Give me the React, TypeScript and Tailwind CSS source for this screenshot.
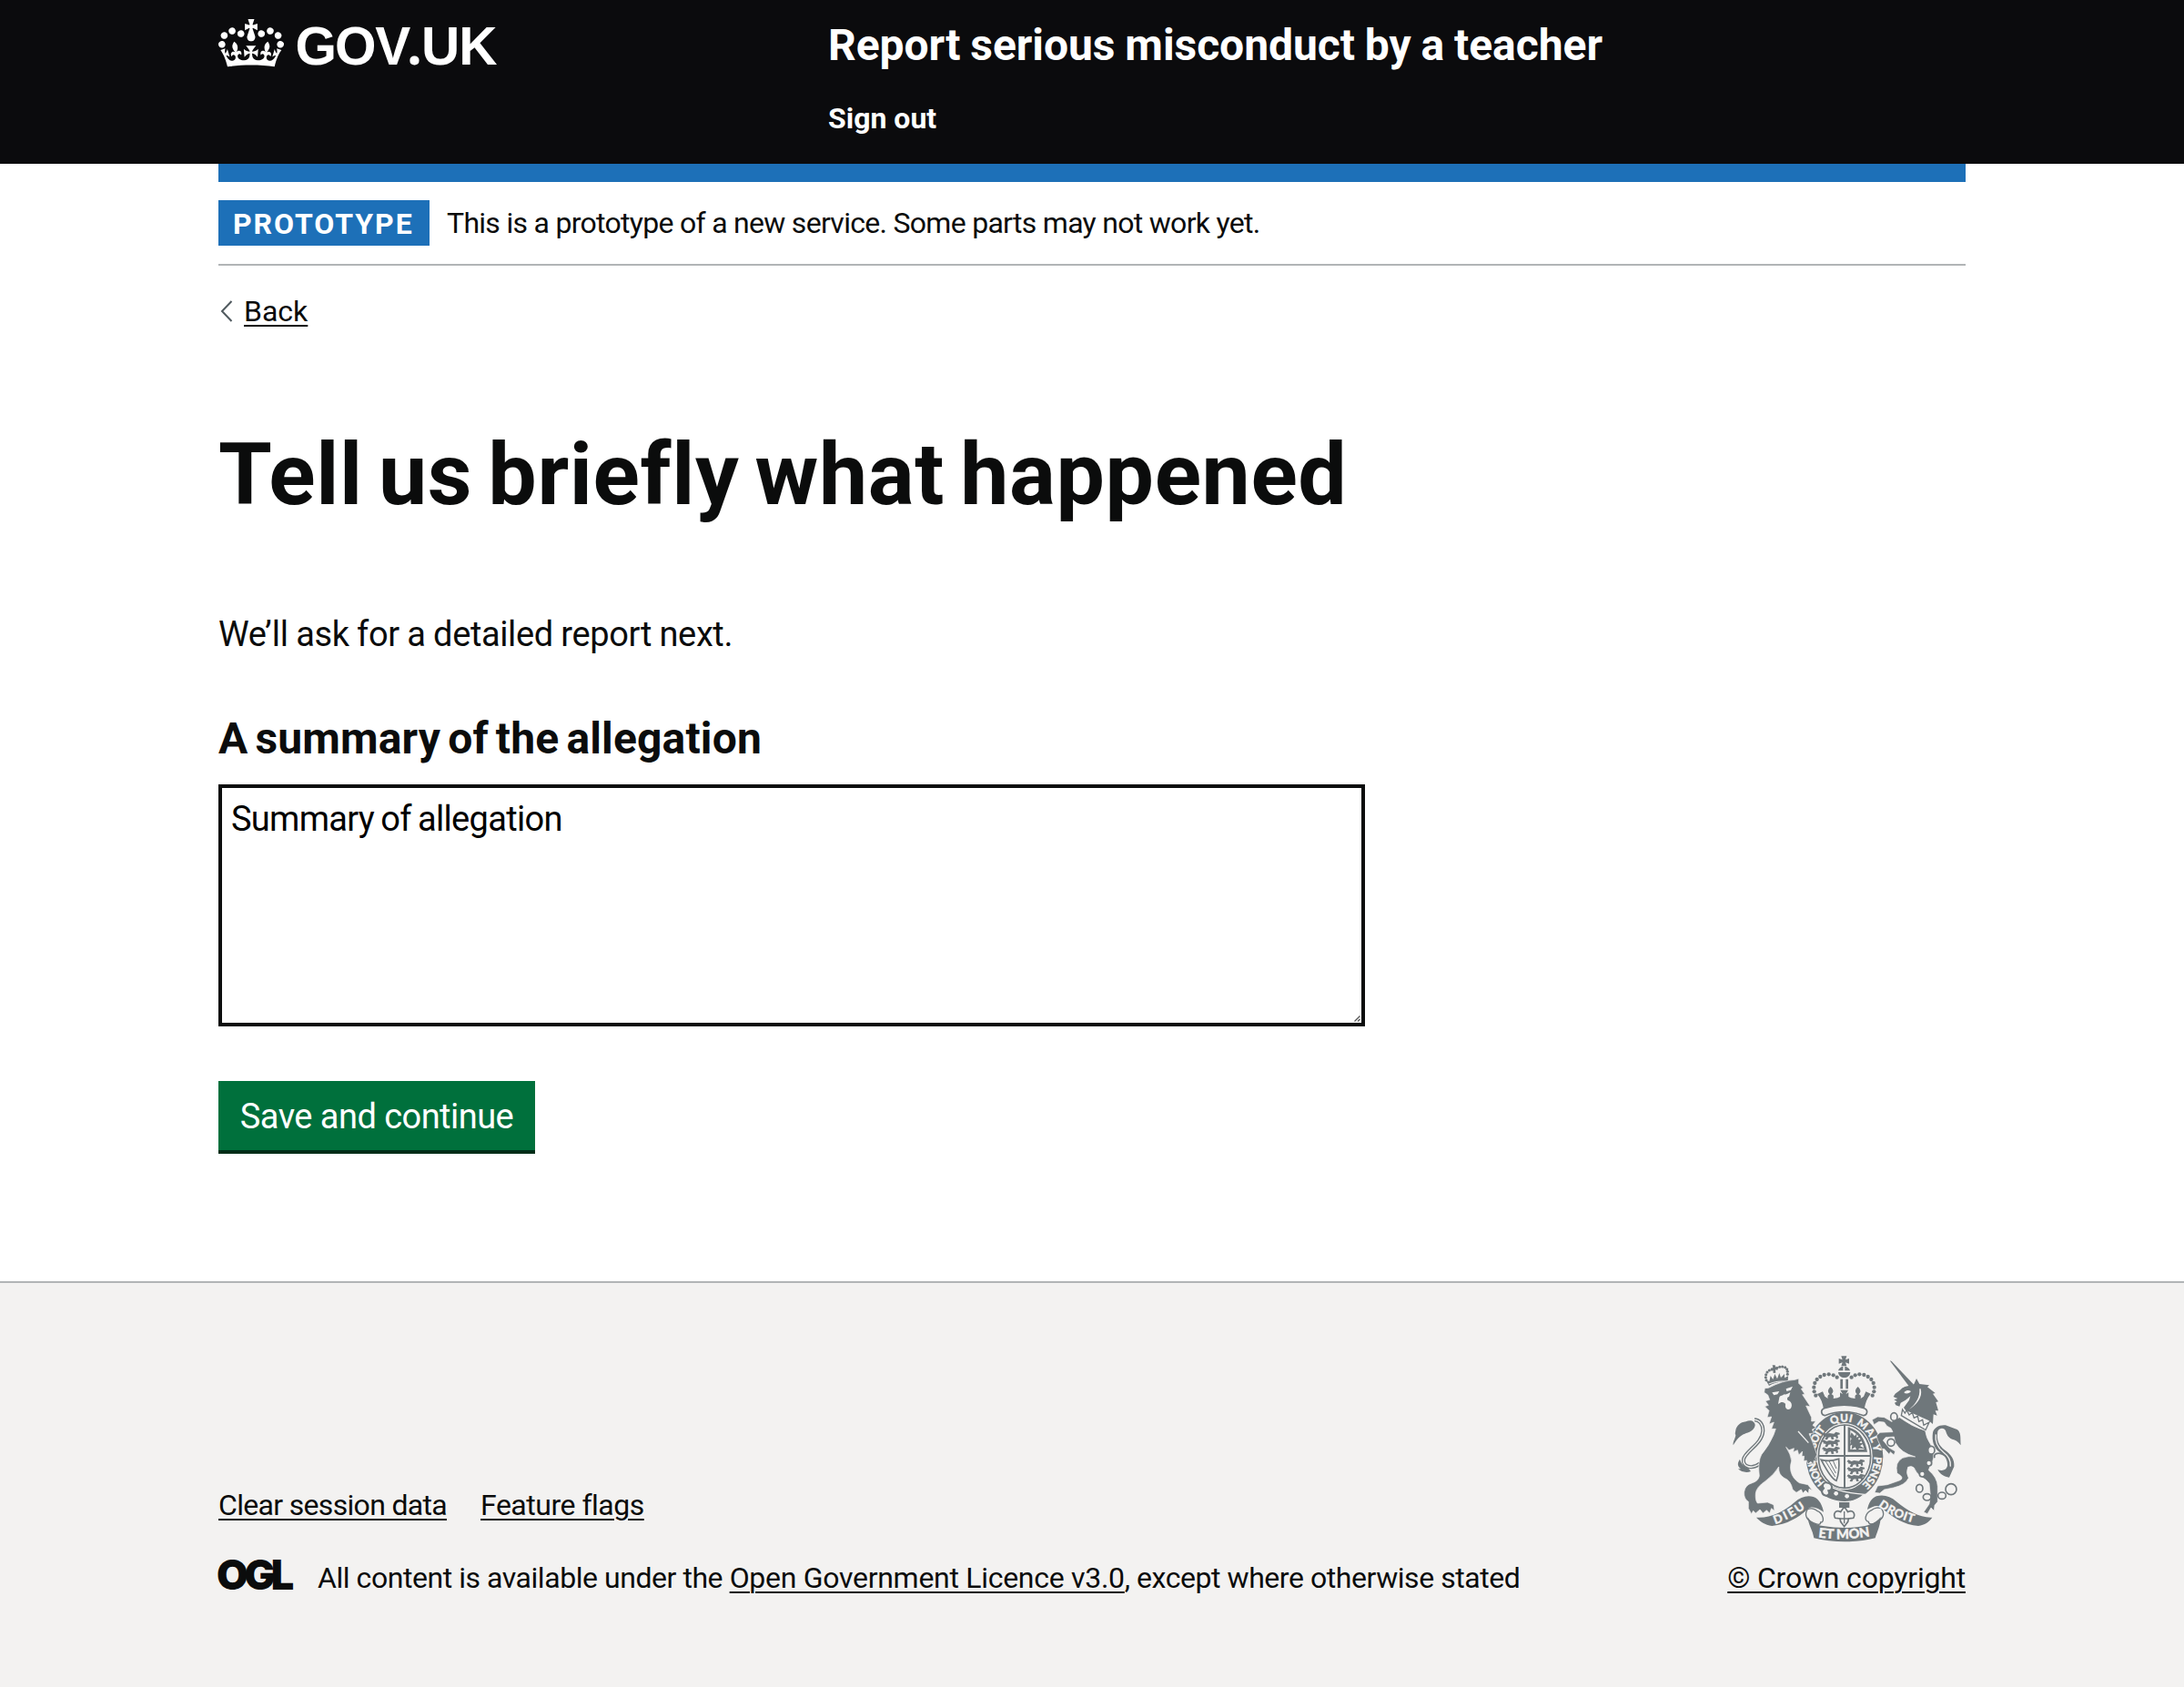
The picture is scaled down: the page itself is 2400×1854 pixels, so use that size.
import React from "react";

const CROWN =
  "M25 30.2c3.5 1.5 7.7-.2 9.1-3.7 1.5-3.6-.2-7.8-3.9-9.2-3.6-1.4-7.6.3-9.1 3.9-1.4 3.5.3 7.5 3.9 9zM9 39.5c3.6 1.5 7.8-.2 9.2-3.7 1.5-3.6-.2-7.8-3.9-9.1-3.6-1.5-7.6.2-9.1 3.8-1.4 3.5.3 7.5 3.8 9zM4.4 57.2c3.5 1.5 7.7-.2 9.1-3.8 1.5-3.6-.2-7.7-3.9-9.1-3.5-1.5-7.6.3-9.1 3.8-1.4 3.5.3 7.6 3.9 9.1zm38.3-21.4c3.5 1.5 7.7-.2 9.1-3.8 1.5-3.6-.2-7.7-3.9-9.1-3.6-1.5-7.6.3-9.1 3.8-1.3 3.6.4 7.7 3.9 9.1zm64.4-5.6c-3.6 1.5-7.8-.2-9.1-3.7-1.5-3.6.2-7.8 3.8-9.2 3.6-1.4 7.7.3 9.2 3.9 1.3 3.5-.4 7.5-3.9 9zm15.9 9.3c-3.6 1.5-7.7-.2-9.1-3.7-1.5-3.6.2-7.8 3.7-9.1 3.6-1.5 7.7.2 9.2 3.8 1.5 3.5-.3 7.5-3.8 9zm4.7 17.7c-3.6 1.5-7.8-.2-9.2-3.8-1.5-3.6.2-7.7 3.9-9.1 3.6-1.5 7.7.3 9.2 3.8 1.3 3.5-.4 7.6-3.9 9.1zM89.3 35.8c-3.6 1.5-7.8-.2-9.2-3.8-1.4-3.6.2-7.7 3.9-9.1 3.6-1.5 7.7.3 9.2 3.8 1.4 3.6-.3 7.7-3.9 9.1zM69.7 17.7l8.9 4.7V9.3l-8.9 2.8c-.2-.3-.5-.6-.9-.9L72.4 0H59.6l3.5 11.2c-.3.3-.6.5-.9.9l-8.8-2.8v13.1l8.8-4.7c.3.3.6.7.9.9l-5 15.4v.1c-.2.8-.4 1.6-.4 2.4 0 4.1 3.1 7.5 7 8.1h.2c.3 0 .7.1 1 .1.4 0 .7 0 1-.1h.2c4-.6 7.1-4.1 7.1-8.1 0-.8-.1-1.7-.4-2.4V34l-5.1-15.4c.4-.2.7-.6 1-.9zM66 92.8c16.9 0 32.8 1.1 47.1 3.2 4-16.9 8.9-26.7 14-33.5l-9.6-3.4c1 4.9 1.1 7.2 0 10.2-1.5-1.4-3-4.3-4.2-8.7L108.6 76c2.8-2 5-3.2 7.5-3.3-4.4 9.4-10 11.9-13.6 11.2-4.3-.8-6.3-4.6-5.6-7.9 1-4.7 5.7-5.9 8-.5 4.3-8.7-3-11.4-7.6-8.8 7.1-7.2 7.9-13.5 2.1-21.1-8 6.1-8.1 12.3-4.5 20.8-4.7-5.4-12.1-2.5-9.5 6.2 3.4-5.2 7.9-2 7.2 3.1-.6 4.3-6.4 7.8-13.5 7.2-10.3-.9-10.9-8-11.2-13.8 2.5-.5 7.1 1.8 11 7.3L80.2 60c-4.1 4.4-8 5.3-12.3 5.4 1.4-4.4 8-11.6 8-11.6H55.5s6.4 7.2 7.9 11.6c-4.2-.1-8-1-12.3-5.4l1.4 16.4c3.9-5.5 8.5-7.7 10.9-7.3-.3 5.8-.9 12.8-11.1 13.8-7.2.6-12.9-2.9-13.5-7.2-.7-5 3.8-8.3 7.1-3.1 2.7-8.7-4.6-11.6-9.4-6.2 3.7-8.5 3.6-14.7-4.6-20.8-5.8 7.6-5 13.9 2.2 21.1-4.7-2.6-11.9.1-7.7 8.8 2.3-5.5 7.1-4.2 8.1.5.7 3.3-1.3 7.1-5.7 7.9-3.5.7-9-1.8-13.5-11.2 2.5.1 4.7 1.3 7.5 3.3l-4.7-15.4c-1.2 4.4-2.7 7.2-4.3 8.7-1.1-3-.9-5.3 0-10.2l-9.5 3.4c5 6.9 9.9 16.7 14 33.5 14.8-2.1 30.8-3.2 47.7-3.2z";

function GovUkLogo() {
  return (
    <svg width="308" height="54" viewBox="0 0 308 54" className="block overflow-visible fill-white" aria-label="GOV.UK">
      <path d={CROWN} transform="scale(0.5455)" />
      <text y="50" x="84.5 128 172.3" className="font-['Liberation_Sans',sans-serif] text-[58.500px] font-bold">
        GOV
        <tspan x="207.3" className="font-['Noto_Sans',sans-serif]">.</tspan>
        <tspan x="222.9 264.2">UK</tspan>
      </text>
    </svg>
  );
}

const crownDots = [
  [344, 190], [339, 177], [338, 163], [341, 149], [348, 137], [359, 128], [372, 122], [387, 120], [402, 123], [414, 130],
  [462, 130], [474, 123], [488, 120], [503, 122], [516, 128], [527, 137], [534, 149], [537, 163], [536, 177], [531, 190],
];

const smallCrownDots = [
  [181, 139], [179, 130], [180, 121], [184, 113], [191, 107], [199, 104], [216, 99], [225, 96], [234, 95], [243, 97], [249, 103], [251, 111], [251, 120],
];

const lionsPassant = [
  [366, 312], [366, 336], [366, 360], [448, 402], [448, 426], [448, 450],
];

function RoyalArms() {
  return (
    <svg width="252" height="206" viewBox="70 56 756 618" className="block fill-[#6f777b]" aria-hidden="true">
      <defs>
        <path id="garter" d="M439 506A97 115 0 1 1 439.100 506" />
        <path id="ribbon-left" d="M210 614Q262 598 318 555" />
        <path id="ribbon-mid" d="M350 657Q438 670 530 653" />
        <path id="ribbon-right" d="M548 554Q602 594 670 611" />
      </defs>

      {/* imperial crown */}
      <path d="M428 60h18l-4 12 12-4v17l-12-4 4 12h-18l4-12-12 4V68l12 4z" />
      <path d="M440 94v14h17a20 20 0 0 0-17-14zM434 94v14h-16a20 20 0 0 1 16-14z" />
      <path d="M418 113h40c-1 12-10 18-20 18s-19-6-20-18z" />
      <path d="M425 136h8v32h-8zM443 136h8v32h-8z" />
      {crownDots.map(([x, y]) => (
        <circle key={`${x}-${y}`} cx={x} cy={y} r="6.4" />
      ))}
      <path d="M351 184l16-7 7 16 10 7c-2-8 0-12 6-14-8-8-7-15 3-25 10 10 11 17 3 25 6 2 8 6 6 14l14-2 8-4v-14l9 6-8-14h26l-8 14 9-6v14l8 4 14 2c-2-8 0-12 6-14-8-8-7-15 3-25 10 10 11 17 3 25 6 2 8 6 6 14l10-7 7-16 16 7c-12 14-18 31-21 51-42-13-92-13-134 0-3-20-9-37-22-51z" />
      <path d="M372 232c42-13 90-13 132 0 14 5 10 23-2 24-40-16-86-16-128 0-12-1-16-19-2-24z" className="fill-[#f3f2f1] stroke-[#6f777b] stroke-[5px]" />

      {/* garter and shield */}
      <ellipse cx="439" cy="391" rx="127" ry="147" />
      <ellipse cx="439" cy="391" rx="92" ry="110" className="fill-[#f3f2f1]" />
      <ellipse cx="439" cy="391" rx="86" ry="104" className="fill-none stroke-[#6f777b] stroke-[5px]" />
      <path d="M436 286h6v210h-6zM352 386h174v6H352z" />
      <path d="M450 294c34 8 56 34 64 82h-64zM458 304v64h46c-8-34-22-54-46-64z" fillRule="evenodd" />
      <path d="M462 312l10 12 8-10-2 14 10-4-4 12 14-2-10 12 14 2-12 8 16 10-18-2-8 8-6-12-12 8 2-16-8 4 4-14-4 2 6-12-6-6z" />
      {lionsPassant.map(([x, y]) => (
        <path
          key={`${x}-${y}`}
          transform={`translate(${x} ${y})`}
          d="M4 0l10 5 8-3 16 2 6-6 12 3 2 5-8 2 2 10-6 3-2-7-8 0 2 8-8 1-2-8-8 1-4 8-8-1 4-9-10-2 2-4-6-2z"
        />
      ))}
      <path d="M362 402c20 6 38 4 58-3 2 26 0 50-8 72-14-6-34-38-50-69z" className="fill-none stroke-[#6f777b] stroke-[5px]" />
      <path d="M376 406l32 52M388 406l22 40M401 405l11 26" className="stroke-[#6f777b] stroke-[3px]" />
      <g className="fill-[#f3f2f1] stroke-[#f3f2f1] font-['Lato',sans-serif] text-[35px] font-black">
        <text>
          <textPath href="#garter" startOffset="72" textLength="82">HONI</textPath>
        </text>
        <text>
          <textPath href="#garter" startOffset="192" textLength="72">SOIT</textPath>
        </text>
        <text>
          <textPath href="#garter" startOffset="289" textLength="68">QUI</textPath>
        </text>
        <text>
          <textPath href="#garter" startOffset="373" textLength="82">MAL</textPath>
        </text>
        <text>
          <textPath href="#garter" startOffset="462">Y</textPath>
        </text>
        <text>
          <textPath href="#garter" startOffset="500" textLength="104">PENSE</textPath>
        </text>
      </g>

      {/* buckle and strap */}
      <path d="M372 476c40 32 86 36 132 40-24 22-56 30-92 22-18-4-34-10-44-20z" className="stroke-[#f3f2f1] stroke-[4px]" />
      <path d="M384 478c-14-4-22 8-14 18-10 8-6 22 8 24 10 0 12-8 8-16 14-2 16-20-2-26z" className="fill-[#f3f2f1] stroke-[#6f777b] stroke-[6px]" />
      <circle cx="411" cy="513" r="7" className="fill-[#f3f2f1]" />
      <circle cx="447" cy="522" r="7" className="fill-[#f3f2f1]" />

      {/* lion crown */}
      {smallCrownDots.map(([x, y]) => (
        <circle key={`${x}-${y}`} cx={x} cy={y} r="4.6" />
      ))}
      <path d="M201 90l9 0 2 7 7 0-1 9-7-1 1 10-8 1-1-9-7 1 0-8 7-1z" />
      <path d="M180 140l11 3 4-18 8 12 6-18 8 16 7-19 5 15 12-12 0 13 12-6-1 20c-22-4-44 2-62 12z" />
      <path d="M189 152c20-8 40-11 64-8" className="fill-none stroke-[#f3f2f1] stroke-[3px]" />

      {/* lion tail */}
      <path d="M160 414c-28 22-58 10-54-14 6-28 62-50 64-94 0-22-12-36-28-36" className="fill-none stroke-[#6f777b] stroke-[12px]" />
      <path d="M160 414c-28 22-58 10-54-14 6-28 62-50 64-94 0-22-12-36-28-36" className="fill-none stroke-[#f3f2f1] stroke-[4px]" />
      <path d="M72 354c-2-12 8-24 8-34-4-4 0-12 0-16 4-14 14-26 34-28 14-8 30-2 30 12-2 18-22 24-34 28-16 6-28 20-38 38zM94 400c-10 14-8 24 4 32l-10 0c10 10 28 14 42 8l-10-12c-14-4-22-14-26-28z" />

      {/* lion head, mane, body and legs */}
      <path
        d="M188 165Q236 140 276 138L288 134V150L303 165 296 168 308 186 300 187 326 226 312 224 330 262V275L344 274 334 288 345 296 332 302 338 314 322 316 334 345 348 385 342 398 350 410 338 404 336 418 328 408 318 416 314 404 304 406 306 390 298 390 300 374 288 386 284 370 270 376 272 364 256 370 246 360Q262 385 264 405 258 425 262 440 268 465 290 478L318 484 333 503 322 498 320 513 310 503 302 512 296 500 280 510 268 500Q262 470 240 462 220 450 222 425 208 450 178 472 148 492 146 512 144 535 152 545L185 542 205 550 208 570 198 562 192 578 182 568 170 578 160 566 146 578 138 570 132 580 122 562V540Q106 530 108 508 110 485 135 478 155 472 158 455 152 410 165 385 190 355 205 320L212 300 198 300 206 278 190 284 198 260 184 262 190 240 176 226 188 222 178 208 192 204 186 188 174 180 176 166Z"
        className="stroke-[#f3f2f1] stroke-2"
      />
      <path d="M200 180l24-4-6 10-12 3zM246 168l22-8-6 12-14 4zM224 196c4-8 10-4 16-10 6 2 12-2 20-6l-4 14c-6 2-8 6-4 12 14 4 16 18 8 28-10 6-18-2-16-12 2-8-8-10-14-10l-10 6z" className="fill-[#f3f2f1]" />
      <path d="M286 308l34 38" className="fill-none stroke-[#f3f2f1] stroke-[4px]" />

      {/* unicorn head */}
      <path d="M588 75l6 2 72 76-12 10z" />
      <path d="M650 158L668 152 676 134 686 152 718 156 712 162 738 182 730 184 748 210 740 212 748 240 738 240 744 256 732 252 730 284 716 272 640 238 634 230 652 205 656 192 640 205 624 214 620 226 608 222 604 214 612 210 602 204 614 200 600 194 606 184 622 172Q632 160 650 158Z" />
      <path d="M636 178c8-6 14-6 22-2-4 7-14 9-22 6zM690 168c8 30-16 54-38 68 22-18 36-40 34-68z" className="fill-[#f3f2f1]" />
      <path d="M630 236l8 12 6-10 8 16 10-8 6 18 12-6 4 18 12-6 4 18 18-10-12 26-80-48z" className="fill-[#f3f2f1] stroke-[#6f777b] stroke-[4px]" />

      {/* unicorn body and legs */}
      <path
        d="M620 262Q660 292 705 306 708 330 722 350 740 378 728 412 720 420 716 436 745 460 746 490V540L736 552 734 570 724 560 712 580 700 574 718 548 722 520 718 480Q708 465 690 458 672 440 668 428 660 420 648 426 640 445 650 462 640 485 600 494L570 500 555 512 538 510 548 488 580 484 620 470Q640 462 612 446 604 410 630 396 650 388 672 392 625 380 606 345L602 326 574 328 566 338 586 362 606 374 602 386 590 376 586 384 570 366 562 366 548 336 544 322 556 312 598 310 592 298 578 290 570 278 552 276 536 286 530 270 548 260 570 262 594 276Z"
        className="stroke-[#f3f2f1] stroke-2"
      />

      {/* unicorn tail */}
      <path d="M736 396c-10-30 60-14 56 32-2 14-10 18-18 18" className="fill-none stroke-[#6f777b] stroke-[5px]" />
      <path d="M730 312c4-16 20-26 42-24l38 14c14 10 10 26 12 52-8-12-18-18-28-20-14-4-18-16-22-28-8-12-20-8-26 2-4 30 2 46 24 62 20 14 32 30 30 54l-16 36c-16-2-30-10-38-26 16 6 28 2 32-12 2-18-8-34-22-42-24-16-30-40-26-68z" />
      <path d="M740 318c-4 26 6 44 26 60 16 12 24 26 22 46" className="fill-none stroke-[#f3f2f1] stroke-[4px]" />

      {/* chain */}
      <g className="fill-[#f3f2f1] stroke-[#6f777b] stroke-[5px]">
        <ellipse cx="602" cy="260" rx="11" ry="13" />
        <ellipse cx="592" cy="345" rx="12" ry="12" />
        <ellipse cx="725" cy="370" rx="11" ry="13" />
        <circle cx="717" cy="413" r="9" />
        <circle cx="695" cy="449" r="9" />
        <ellipse cx="686" cy="496" rx="11" ry="13" />
        <ellipse cx="711" cy="525" rx="13" ry="11" />
        <ellipse cx="760" cy="520" rx="13" ry="11" />
        <circle cx="790" cy="499" r="18" />
      </g>

      {/* fleur-de-lis pendant */}
      <path d="M421 542h34v18h-34z" />
      <path d="M438 556l12 18c16-10 26 6 18 20l-16 2-2 10-12 16-12-16-2-10-16-2c-8-14 2-30 18-20z" className="fill-[#f3f2f1] stroke-[#6f777b] stroke-[5px]" />
      <path d="M422 596h32M438 572v40" className="stroke-[#6f777b] stroke-[4px]" />

      {/* motto ribbons */}
      <path d="M148 592c44 4 92-20 126-50 20-18 42-24 62-18 20 6 30 30 34 50-18-14-40-22-52-10-30 28-70 52-118 56-24-4-38-14-52-28z" />
      <path d="M728 592c-40 2-82-22-118-52-20-18-42-24-66-18-16 6-26 24-30 44 18-12 38-18 50-4 34 30 72 54 118 58 22-4 34-12 46-28z" />
      <path d="M316 566c-12 22 2 36 20 44 14 6 24 8 24-2 14 2 10-30-12-38-10-8-24-10-32-4zM560 562c16 22 2 36-16 46-14 8-26 8-26-2-16-2-12-28 10-38 10-8 24-10 32-6z" className="fill-[#f3f2f1] stroke-[#6f777b] stroke-[4px]" />
      <path d="M318 590c6 16 24 26 50 30 46 8 94 8 138 0 26-6 42-16 52-30 0 24-10 46-18 70-60 16-140 16-202 0-4-28-20-46-20-70z" />
      <g className="fill-[#f3f2f1] stroke-[#f3f2f1] font-['Lato',sans-serif] text-[39px] font-black">
        <text>
          <textPath href="#ribbon-left" startOffset="0" textLength="114">DIEU</textPath>
        </text>
        <text>
          <textPath href="#ribbon-mid" startOffset="2" textLength="172" className="text-[44px]">ET MON</textPath>
        </text>
        <text>
          <textPath href="#ribbon-right" startOffset="2" textLength="128">DROIT</textPath>
        </text>
      </g>
    </svg>
  );
}

const link = "underline decoration-2 underline-offset-4";

export default function App() {
  return (
    <div className="flex h-[1854px] flex-col bg-white font-['Roboto',sans-serif] text-[32px] leading-10 text-[#0b0c0c]">
      <header className="h-[180px] shrink-0 bg-[#0b0b0d] text-white">
        <div className="mx-auto flex w-[1920px]">
          <div className="w-[670px] pt-[21px]">
            <GovUkLogo />
          </div>
          <div className="pt-5">
            <div className="whitespace-nowrap text-[48px] leading-[60px] font-bold tracking-[-0.050px] [word-spacing:-1px]">
              Report serious misconduct by a teacher
            </div>
            <nav className="mt-[30px] font-bold">Sign out</nav>
          </div>
        </div>
      </header>

      <main className="mx-auto w-[1920px] flex-1">
        <div className="h-5 bg-[#1d70b8]" />
        <div className="flex h-[92px] items-center gap-5 border-b-2 border-[#b1b4b6]">
          <strong className="h-[50px] w-[232px] bg-[#1d70b8] pt-px pl-4 leading-[50px] font-bold tracking-[1.950px] text-white">
            PROTOTYPE
          </strong>
          <span className="-ml-px whitespace-nowrap tracking-[-0.71px]">
            This is a prototype of a new service. Some parts may not work yet.
          </span>
        </div>

        <div className="mt-[30px] flex items-center">
          <svg width="16" height="26" viewBox="0 0 16 26" className="mr-3 fill-none stroke-[#505a5f] stroke-2">
            <path d="M14.5 2 4 13l10.500 11" />
          </svg>
          <a className={link}>Back</a>
        </div>

        <h1 className="mt-[110px] whitespace-nowrap text-[95px] leading-[100px] font-bold tracking-[0.620px] [word-spacing:-7px]">
          Tell us briefly what happened
        </h1>
        <p className="mt-[100px] text-[38px] leading-[50px] tracking-[-0.38px] [word-spacing:-0.500px]">
          We’ll ask for a detailed report next.
        </p>
        <label className="mt-[60px] block text-[48px] leading-[60px] font-bold tracking-[0.150px] [word-spacing:-4px]">
          A summary of the allegation
        </label>
        <div className="relative mt-5 h-[266px] w-[1260px]">
          <textarea
            defaultValue="Summary of allegation"
            className="block h-full w-full resize-none border-4 border-[#0b0c0c] px-2.5 pt-[9px] text-[38px] leading-[50px] tracking-[-0.7px] text-black outline-none [word-spacing:-1.500px]"
          />
          <svg width="7" height="7" viewBox="0 0 7 7" className="absolute right-[5px] bottom-[5px] stroke-[#555] stroke-[1.300px]">
            <path d="M0.500 6.500 6.500 0.500M4 6.500 6.500 4" />
          </svg>
        </div>
        <button className="mt-[60px] block h-[76px] w-[348px] bg-[#00703c] pt-0.5 text-[38px] leading-[50px] tracking-[-0.54px] text-white shadow-[0_4px_0_#002d18]">
          Save and continue
        </button>
      </main>

      <footer className="h-[446px] shrink-0 border-t-2 border-[#b1b4b6] bg-[#f3f2f1] pt-[79px]">
        <div className="mx-auto flex h-[265px] w-[1920px] items-end justify-between">
          <div>
            <div className="mb-10 flex gap-[37px]">
              <a className={`${link} tracking-[-0.68px]`}>Clear session data</a>
              <a className={`${link} tracking-[-0.49px]`}>Feature flags</a>
            </div>
            <div className="flex whitespace-nowrap">
              <div className="-ml-0.5 h-10 w-[111px] font-['Inter',sans-serif] text-[45px] leading-[33px] font-black tracking-[-4.500px]">
                OGL
              </div>
              <span className="tracking-[-0.45px]">
                All content is available under the{" "}
                <a className={`${link} tracking-[-0.29px]`}>Open Government Licence v3.0</a>, except where otherwise
                stated
              </span>
            </div>
          </div>
          <div className="flex flex-col items-end">
            <div className="mr-1 mb-[19px]">
              <RoyalArms />
            </div>
            <a className={`${link} tracking-[-0.190px]`}>© Crown copyright</a>
          </div>
        </div>
      </footer>
    </div>
  );
}
